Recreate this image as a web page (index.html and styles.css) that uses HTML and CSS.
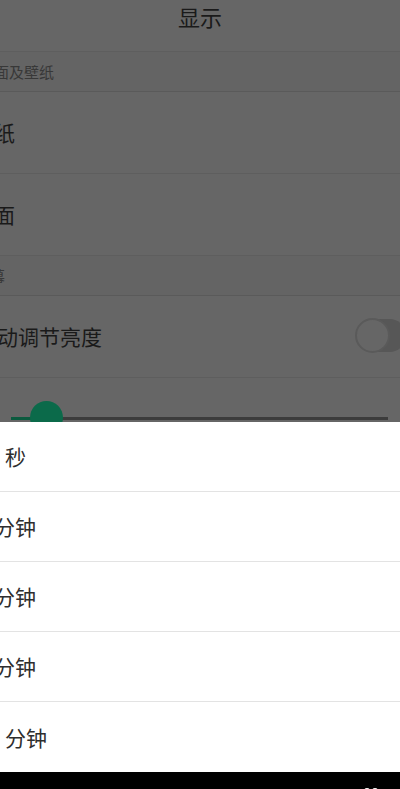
FILE: index.html
```html
<!DOCTYPE html>
<html lang="zh-CN">
<head>
  <meta charset="UTF-8">
  <meta name="viewport" content="width=device-width, initial-scale=1.0">
  <title>显示</title>
  <link rel="stylesheet" href="styles.css">
</head>
<body>
  <div class="screen">
    <div class="settings">
      <div class="titlebar">显示</div>
      <div class="section"><span class="section-label">面及壁纸</span></div>
      <div class="row"><span class="row-label cut-1">纸</span></div>
      <div class="row"><span class="row-label cut-1">面</span></div>
      <div class="section"><span class="section-label cut-2">幕</span></div>
      <div class="row row-toggle">
        <span class="row-label cut-3">动调节亮度</span>
        <div class="switch"><div class="switch-knob"></div></div>
      </div>
      <div class="slider-row">
        <div class="slider">
          <div class="slider-fill"></div>
          <div class="slider-thumb"></div>
        </div>
      </div>
    </div>

    <div class="sheet">
      <div class="option"><span class="option-label lead">秒</span></div>
      <div class="option"><span class="option-label clip">分钟</span></div>
      <div class="option"><span class="option-label clip">分钟</span></div>
      <div class="option"><span class="option-label clip">分钟</span></div>
      <div class="option"><span class="option-label lead">分钟</span></div>
    </div>

    <div class="navbar">
      <svg class="nav-dots" width="20" height="6" viewBox="0 0 20 6">
        <circle cx="5" cy="5" r="3" fill="#fff"/>
        <circle cx="13" cy="5" r="3" fill="#fff"/>
      </svg>
    </div>
  </div>
</body>
</html>
```

FILE: styles.css
```css
body {
  margin: 0;
  padding: 0;
  background-color: #000;
  font-family: 'Noto Sans CJK SC', 'Noto Sans', sans-serif;
}
.screen {
  width: 400px;
  height: 789px;
  display: flex;
  flex-direction: column;
  overflow: hidden;
}
.settings {
  height: 422px;
  flex: none;
  background-color: #666666;
  overflow: hidden;
}
.titlebar {
  height: 32px;
  padding-bottom: 19px;
  display: flex;
  align-items: center;
  justify-content: center;
  font-size: 22px;
  color: #1a1a1a;
  border-bottom: 1px solid #5e5e5e;
}
.section {
  height: 39px;
  display: flex;
  align-items: center;
  background-color: #646464;
  border-bottom: 1px solid #5a5a5a;
}
.section-label {
  margin-left: -6px;
  font-size: 15px;
  color: #383838;
}
.section-label.cut-2 {
  margin-left: -10px;
}
.row {
  height: 79px;
  padding-bottom: 2px;
  display: flex;
  align-items: center;
  border-bottom: 1px solid #5e5e5e;
}
.row-label {
  font-size: 21px;
  color: #1a1a1a;
}
.cut-1 {
  margin-left: -6px;
}
.cut-3 {
  margin-left: -3px;
}
.row-toggle {
  justify-content: space-between;
}
.switch {
  width: 50px;
  height: 33px;
  margin-right: -6px;
  border-radius: 17px;
  background-color: #575757;
  display: flex;
  align-items: center;
}
.switch-knob {
  width: 31px;
  height: 31px;
  margin-left: -1px;
  border-radius: 50%;
  background-color: #666666;
  border: 2px solid #5a5a5a;
}
.slider-row {
  height: 43px;
  padding: 0 12px 0 11px;
}
.slider {
  position: relative;
  margin-top: 39px;
  height: 3px;
  background-color: #3c3c3c;
}
.slider-fill {
  width: 36px;
  height: 3px;
  background-color: #0b5a3e;
}
.slider-thumb {
  position: absolute;
  left: 19px;
  top: -16px;
  width: 33px;
  height: 33px;
  border-radius: 50%;
  background-color: #0b6a4a;
}
.sheet {
  height: 350px;
  flex: none;
  background-color: #fff;
}
.option {
  height: 68px;
  padding-bottom: 1px;
  display: flex;
  align-items: center;
  border-bottom: 1px solid #e3e3e3;
}
.option:last-child {
  border-bottom: none;
  height: 69px;
}
.option-label {
  font-size: 21px;
  color: #2e2e2e;
}
.option-label.lead {
  margin-left: 5px;
}
.option-label.clip {
  margin-left: -6px;
}
.navbar {
  flex: 1;
  background-color: #000;
  display: flex;
  justify-content: flex-end;
  align-items: flex-end;
  padding-right: 18px;
}
.nav-dots {
  display: block;
  margin-bottom: -3px;
}
```
